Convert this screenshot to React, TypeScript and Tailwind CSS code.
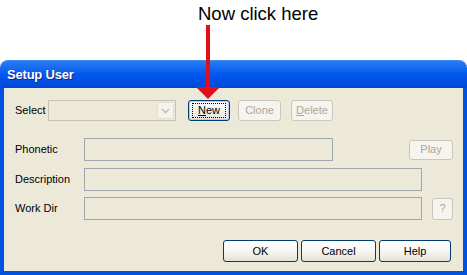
import React from 'react';

const font = { fontFamily: '"Liberation Sans", Arial, sans-serif' };

// XP style push button
const XpButton: React.FC<{ w: string; h?: string; disabled?: boolean; children: React.ReactNode }> = ({ w, h = 'h-[22px]', disabled, children }) => (
  <div
    className={`${w} ${h} shrink-0 flex items-center justify-center rounded-[3px] border text-[11px] ${
      disabled
        ? 'border-[#c9c7ba] bg-[#f5f4ee] text-[#aca899]'
        : 'border-[#003c74] bg-gradient-to-b from-white via-[#f7f6f2] to-[#e3e1d8] text-black'
    }`}
  >
    {children}
  </div>
);

const Field: React.FC<{ w: string }> = ({ w }) => (
  <div className={`${w} h-[23px] shrink-0 border border-[#9ea7b0] bg-[#ece9d8]`} />
);

const App: React.FC = () => {
  return (
    <div className="relative w-[467px] h-[275px] bg-white overflow-hidden flex flex-col" style={font}>
      {/* Caption above the window */}
      <div className="h-[60px] shrink-0 pl-[198px] pt-[5px] text-[18.5px] leading-[18px] text-black">Now click here</div>

      {/* Dialog */}
      <div className="flex-1 flex flex-col">
        <div className="h-[28px] shrink-0 rounded-t-[8px] border-t border-[#3d8cf5] bg-gradient-to-b from-[#2a7bf4] via-[#0058ee] to-[#0048d6] flex items-center pl-[7px]">
          <span className="text-[13px] font-bold tracking-[-0.2px] text-white [text-shadow:1px_1px_0_#0a2a8a]">Setup User</span>
        </div>

        <div className="flex-1 flex flex-col bg-[#ece9d8] border-x-4 border-b-4 border-[#0053e1] pl-[11px] pr-[10px] text-[11px] text-black">
          {/* Select row */}
          <div className="mt-[12px] h-[21px] flex items-center">
            <span className="w-[33px]">Select</span>
            <div className="w-[128px] h-[21px] border border-[#c5c2b3] bg-[#ece9d8] flex justify-end p-[1px]">
              <div className="w-[17px] h-full bg-[#f4f3ee] border border-[#e2e0d6] flex items-center justify-center">
                <svg width="9" height="6" viewBox="0 0 9 6">
                  <path d="M1 1 L4.5 4.5 L8 1" fill="none" stroke="#c3c0b2" strokeWidth="1.6" />
                </svg>
              </div>
            </div>
            <div className="ml-[12px] w-[42px] h-[21px] rounded-[3px] border border-[#003c74] bg-gradient-to-b from-white to-[#e6e4dc] shadow-[inset_0_0_0_1px_#b6cbf0] flex items-center justify-center">
              <span className="w-[34px] h-[15px] border border-dotted border-black flex items-center justify-center leading-none">
                <u>N</u>ew
              </span>
            </div>
            <div className="ml-[8px] flex">
              <XpButton w="w-[43px]" h="h-[21px]" disabled>Clone</XpButton>
            </div>
            <div className="ml-[10px] flex">
              <XpButton w="w-[42px]" h="h-[21px]" disabled>
                <span><u>D</u>elete</span>
              </XpButton>
            </div>
          </div>

          {/* Phonetic */}
          <div className="mt-[17px] flex items-center">
            <span className="w-[69px]">Phonetic</span>
            <Field w="w-[249px]" />
            <div className="ml-auto flex">
              <XpButton w="w-[44px]" h="h-[20px]" disabled>Play</XpButton>
            </div>
          </div>

          {/* Description */}
          <div className="mt-[7px] flex items-center">
            <span className="w-[69px]">Description</span>
            <Field w="w-[338px]" />
          </div>

          {/* Work Dir */}
          <div className="mt-[6px] flex items-center">
            <span className="w-[69px]">Work Dir</span>
            <Field w="w-[338px]" />
            <div className="ml-auto flex">
              <XpButton w="w-[21px]" disabled>?</XpButton>
            </div>
          </div>

          {/* Dialog buttons */}
          <div className="mt-[20px] mb-[9px] mr-[2px] flex justify-end gap-[3px]">
            <XpButton w="w-[75px]">OK</XpButton>
            <XpButton w="w-[75px]">Cancel</XpButton>
            <XpButton w="w-[72px]">Help</XpButton>
          </div>
        </div>
      </div>

      {/* Red pointer arrow */}
      <svg className="absolute left-[196px] top-[25px]" width="24" height="74" viewBox="0 0 24 74">
        <rect x="10" y="0" width="4" height="63" fill="#e0101a" />
        <polygon points="0,62 24,62 12,74" fill="#e0101a" />
      </svg>
    </div>
  );
};

export default App;
